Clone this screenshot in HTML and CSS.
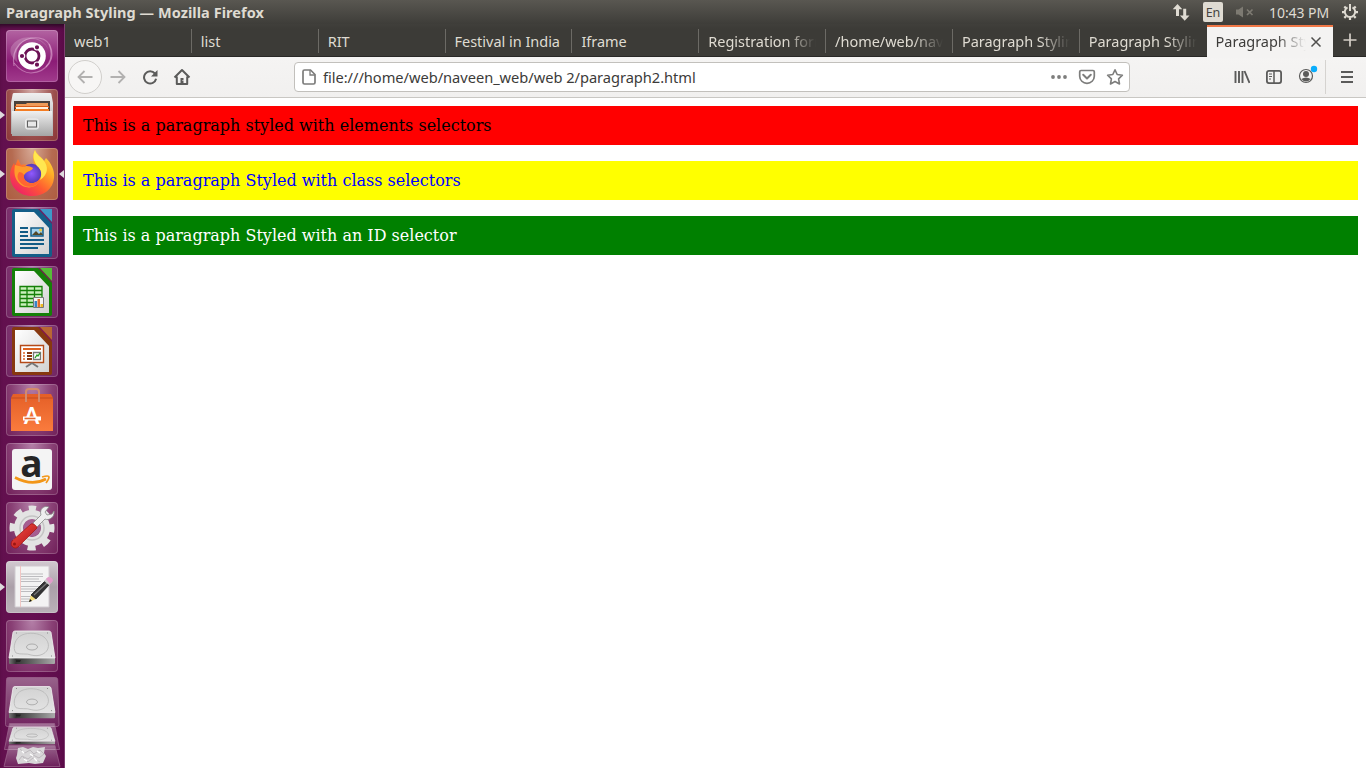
FILE: index.html
```html
<!DOCTYPE html>
<html lang="en">
<head>
<meta charset="utf-8">
<title>Paragraph Styling</title>
<link rel="stylesheet" href="styles.css">
</head>
<body>
<svg class="defs" width="0" height="0" aria-hidden="true">
  <defs>
    <linearGradient id="paper" x1="0" y1="0" x2="1" y2="1"><stop offset="0" stop-color="#fff"/><stop offset="1" stop-color="#d2d2d2"/></linearGradient>
    <linearGradient id="metal" x1="0" y1="0" x2="0" y2="1"><stop offset="0" stop-color="#f0f0f0"/><stop offset="1" stop-color="#a5a5a5"/></linearGradient>
    <linearGradient id="disk" x1="0" y1="0" x2="0" y2="1"><stop offset="0" stop-color="#d2d2d2"/><stop offset="1" stop-color="#e4e4e4"/></linearGradient>
    <linearGradient id="front" x1="0" y1="0" x2="1" y2="0"><stop offset="0" stop-color="#777"/><stop offset=".15" stop-color="#333"/><stop offset="1" stop-color="#aaa"/></linearGradient>
    <linearGradient id="flame" x1="1" y1="0" x2=".2" y2="1"><stop offset="0" stop-color="#fff04f"/><stop offset=".35" stop-color="#ffae26"/><stop offset=".65" stop-color="#ff5b31"/><stop offset="1" stop-color="#ec1d6c"/></linearGradient>
    <radialGradient id="globe"><stop offset="0" stop-color="#9059ff"/><stop offset="1" stop-color="#5639b5"/></radialGradient>
    <linearGradient id="bag" x1="0" y1="0" x2="0" y2="1"><stop offset="0" stop-color="#e45f27"/><stop offset="1" stop-color="#fa7b3d"/></linearGradient>
    <linearGradient id="glass" x1="0" y1="0" x2="0" y2="1"><stop offset="0" stop-color="#fff" stop-opacity=".35"/><stop offset="1" stop-color="#fff" stop-opacity=".08"/></linearGradient>
    <linearGradient id="handle" x1="0" y1="0" x2="1" y2="1"><stop offset="0" stop-color="#f0504b"/><stop offset="1" stop-color="#b3100f"/></linearGradient>
    <symbol id="drive" viewBox="0 0 52 52" preserveAspectRatio="none">
      <path d="M3 38h46v5q0 1-1 1H4q-1 0-1-1z" fill="url(#front)"/>
      <path d="M9 11h34q1.500 0 2 1.500L49 38H3L7 12.500Q7.300 11 9 11z" fill="url(#disk)" stroke="#f5f5f5" stroke-width=".8"/>
      <path d="M10 33c-4-5-1-15 6-18 7-3 17-2 22 2 7 6 5 14-1 17-4 2-8 2-12 1-4-2-10 0-15-2z" fill="none" stroke="#b9b9b9" stroke-width=".9"/>
      <ellipse cx="26" cy="27" rx="5.500" ry="3" fill="#dedede" stroke="#adadad" stroke-width="1"/>
      <path d="M10 40h5l-1 2h-4z" fill="#222"/>
      <path d="M6 36h1M45 36h1M10 13h1M41 13h1" stroke="#888"/>
    </symbol>
  </defs>
</svg>

<div class="desktop">
  <header class="panel">
    <div class="panel-title">Paragraph Styling — Mozilla Firefox</div>
    <div class="indicators">
      <svg class="ind-net" width="18" height="18" viewBox="0 0 18 18"><path d="M5.500 1 .7 6.200H4V13h3V6.200h3.300zM12.700 17.700 7.900 12.500h3.300V5.700h3v6.800h3.300z" fill="#dfdbd2"/></svg>
      <div class="ind-lang">En</div>
      <svg class="ind-sound" width="18" height="12" viewBox="0 0 18 12"><path d="M0 3.500h2.500L7 .5v11L2.500 8.500H0z" fill="#7d7a72"/><path d="m11 3.500 5.500 5.500m0-5.500L11 9" stroke="#7d7a72" stroke-width="1.700"/></svg>
      <div class="ind-time">10:43 PM</div>
      <svg class="ind-gear" width="18" height="18" viewBox="0 0 18 18"><g fill="none" stroke="#dfdbd2"><path d="M6.500 4.300a5.200 5.200 0 1 0 5 0" stroke-width="2"/><path d="M9 1v7" stroke-width="2"/><path d="M1 9.200h2.500M14.500 9.200H17M9 14.500V17M3.300 3.500 5 5.200M14.700 3.500 13 5.200M3.300 14.900 5 13.200M14.700 14.900 13 13.200" stroke-width="2.200"/></g></svg>
    </div>
  </header>

  <div class="workspace">
    <nav class="launcher">
      <div class="tile tile-dash"><svg viewBox="0 0 52 52">
        <g fill="none" stroke="#e9b8dd" stroke-opacity=".5" stroke-width="1.200"><path d="M8 36C5 18 17 6 33 8c14 2 17 20 7 29"/><path d="M43 14c6 14-1 28-18 29-8 0-13-5-17-10"/></g>
        <path d="M5 17C15 0 43 7 43 24c0-9-10-16-18-15C13 10 8 22 12 33 6 28 3 23 5 17z" fill="#fff" opacity=".2"/>
        <circle cx="26" cy="26" r="13.800" fill="#fff"/><circle cx="26" cy="26" r="7" fill="none" stroke="#6b1154" stroke-width="2.800"/>
        <g stroke="#fff" stroke-width="1.200" fill="#6b1154"><circle cx="16" cy="26" r="2.700"/><circle cx="31" cy="17.300" r="2.700"/><circle cx="31" cy="34.700" r="2.700"/></g>
      </svg></div>
      <div class="tile tile-files running"><svg viewBox="0 0 52 52">
        <path d="M8 4h36q1 0 1.300 1L47 14v31H5V14L6.700 5Q7 4 8 4z" fill="url(#metal)"/><path d="M8 12h36v10H8z" fill="#49413b"/>
        <path d="M10 15h10l1-1h21v8H10z" fill="#ef9b58"/><path d="M9 17h34v2H9z" fill="#d95b16"/><path d="M10 18h32v3H10z" fill="#fff2de"/><path d="M9 20h34v2H9z" fill="#f47d23"/>
        <path d="M6 22h40l1 25H6z" fill="url(#metal)"/><rect x="19.500" y="30" width="13" height="10" rx="2" fill="#ddd" stroke="#eee"/><rect x="21.500" y="32" width="9" height="6" fill="#e8e8e8" stroke="#606060"/>
      </svg></div>
      <div class="tile tile-firefox running focused"><svg viewBox="0 0 52 52">
        <path d="M29 2c2 5 7 7 9 11l2-3c5 5 9 12 8 20-1 11-10 18-22 18C13 48 4 39 4 27c0-5 2-9 4-12l1 3 3-7 3 6c5-1 8 0 10 2l4-1c-2-5-3-10 0-16z" fill="url(#flame)"/>
        <circle cx="25.500" cy="25.500" r="9.800" fill="url(#globe)"/>
        <path d="m9 17 8 2c3-2 7-1 10 1-1 3-5 3-7 5-3 2-3 6 0 8 5 4 11 2 14-2-2 9-15 12-22 3-4-5-4-11-3-17z" fill="#ff9b2b"/>
        <path d="M13 24c2 0 4 1 5 3-1 9 10 11 16 4-2 9-15 11-21 2-2-3-2-6 0-9z" fill="#ff6531"/>
        <path d="M29 2c-3 6-1 11 2 16 5 4 5 9 3 14 9-6 8-14 4-19-3-4-8-6-9-11z" fill="#ffe750"/>
      </svg></div>
      <div class="tile tile-office"><svg viewBox="0 0 52 52">
        <rect x="6" y="2" width="40" height="48" rx="2" fill="#145e88"/><path d="M9 5h19l15 16v26H9z" fill="url(#paper)"/><path d="M32 2h14v15z" fill="#83135a" opacity=".8"/><path d="M34 2h12v13z" fill="#3e99c8"/>
        <path d="M14 21h8M14 25h8M14 29h8M14 33h24M14 37h24M14 41h18" stroke="#125c86" stroke-width="1.800"/><path d="M25 21h12v8H25z" fill="#9fd2ed" stroke="#145e88" stroke-width="1.500"/><path d="m26 28 4-4 3 3 2-2 2 3z" fill="#524928"/><circle cx="34.500" cy="23" r="1.500" fill="#efc839"/>
      </svg></div>
      <div class="tile tile-office"><svg viewBox="0 0 52 52">
        <rect x="6" y="2" width="40" height="48" rx="2" fill="#158008"/><path d="M9 5h19l15 16v26H9z" fill="url(#paper)"/><path d="M32 2h14v15z" fill="#83135a" opacity=".8"/><path d="M34 2h12v13z" fill="#56bd38"/>
        <path d="M14 20h22v21H14z" fill="#caf0bc"/><path d="M14 20.500h22v20H14zM14 24.500h22M14 28.500h22M14 32.500h22M14 36.500h22M21 20.500v20M28.500 20.500v20" fill="none" stroke="#158008" stroke-width="1.300"/>
        <path d="M27.500 31.500h10v10h-10z" fill="#f3f3f3" stroke="#777"/><path d="M28.500 35h2.500v6h-2.500z" fill="#3684c6"/><path d="M31.500 33h2.500v8h-2.500z" fill="#e36b28"/><path d="M34.500 38h2.500v3h-2.500z" fill="#edb922"/>
      </svg></div>
      <div class="tile tile-office"><svg viewBox="0 0 52 52">
        <rect x="6" y="2" width="40" height="48" rx="2" fill="#873810"/><path d="M9 5h19l15 16v26H9z" fill="url(#paper)"/><path d="M32 2h14v15z" fill="#83135a" opacity=".8"/><path d="M34 2h12v13z" fill="#b96734"/>
        <path d="M14.500 20.500h23v17h-23z" fill="#fff" stroke="#b54a18" stroke-width="1.400"/><path d="M17 24h18" stroke="#de6220" stroke-width="2"/><path d="M17 28h2M17 31h2M17 34h2" stroke="#e68a5b" stroke-width="2"/><path d="M21 28h5M21 31h5M21 34h5" stroke="#883810" stroke-width="2"/><path d="M27.500 27.500h7v7h-7z" fill="#fff" stroke="#777" stroke-width="1.300"/><path d="m29 33 2-3 1 1 2-3" fill="none" stroke="#269e24" stroke-width="1.300"/><path d="m26 38-6 4m6-4 6 4" stroke="#777" stroke-width="2"/>
      </svg></div>
      <div class="tile"><svg viewBox="0 0 52 52">
        <path d="M7 10h38l2 4v33H5V14z" fill="url(#bag)"/><path d="M5 14h42" stroke="#c34b20"/><path d="M20 18V8q0-3 3-3h7q3 0 3 3v10" fill="none" stroke="#d38a6c" stroke-width="2"/>
        <text x="25.700" y="40" text-anchor="middle" class="software-letter">A</text><path d="M17 34.500h18" stroke="#fff" stroke-width="4"/><path d="M18.500 34.500h11" stroke="#e46831" stroke-width="1.600"/>
      </svg></div>
      <div class="tile"><svg viewBox="0 0 52 52">
        <rect x="6" y="6" width="40" height="41" rx="3" fill="#f4f4f4"/><text x="25.500" y="34" text-anchor="middle" class="amazon-letter">a</text><path d="M9 34.500q17 9 31 1.500" fill="none" stroke="#f29618" stroke-width="2.600"/><path d="M36 34q7-2 7 0t-3 6" fill="none" stroke="#f29618" stroke-width="1.700"/>
      </svg></div>
      <div class="tile"><svg viewBox="0 0 52 52">
        <circle cx="26" cy="26" r="19.500" fill="none" stroke="#e3e3e3" stroke-width="6" stroke-dasharray="8 7.315" stroke-dashoffset="4" transform="rotate(-90 26 26)"/>
        <circle cx="26" cy="26" r="13.500" fill="none" stroke="#e3e3e3" stroke-width="9"/><circle cx="26" cy="26" r="12" fill="none" stroke="#c4c4c4" stroke-width="1.500"/><circle cx="26" cy="26" r="8.500" fill="#a65e91"/>
        <path d="m27 21 8-8c-2-6 3-10 8-8l-4 5 2 3 5-1 2-3c1 6-5 10-9 8l-9 9z" fill="#eee" stroke="#888" stroke-width=".8"/><path d="M25 22c2-1 6 2 6 4L12 45c-3 3-9-1-6-6z" fill="url(#handle)" stroke="#a2110f" stroke-width=".7"/><circle cx="8.500" cy="42" r="1.500" fill="#981512"/>
      </svg></div>
      <div class="tile tile-editor running"><svg viewBox="0 0 52 52">
        <path d="M9 5h34v41H9z" fill="#f3f3f3" stroke="#d0cbd0"/><path d="M14.500 5v41" stroke="#f0bbb8" stroke-width=".8"/><path d="M15 13h22M15 15.500h22M15 18h18M15 20.500h20M15 25.500h22M15 28h17M15 30.500h15M15 35.500h16M15 38h11M15 40.500h9" stroke="#a3a3a8" stroke-width=".7"/>
        <path d="m23 41 2-7 5 4z" fill="#f2dc77"/><path d="m23 41 1-3 2 2z" fill="#111"/><path d="m25 34 14-14 4 4-13 14z" fill="#333" stroke="#111" stroke-width=".7"/><path d="m28 34 13-12" stroke="#777" stroke-width="1.200"/><path d="m38 20 3-3 5 4-3 3z" fill="#ccc"/><path d="m40 18 2-2q5 0 5 4l-3 3z" fill="#e29cca"/>
      </svg></div>
      <div class="tile"><svg viewBox="0 0 52 52"><use href="#drive" width="52" height="52"/></svg></div>
      <svg class="folded" width="65" height="92" viewBox="0 676 65 92">
        <path d="M8.500 677.500h47q2 0 2.200 2l1.300 45q0 2-2 2H7.500q-2 0-2-2l1-45q0-2 2-2z" fill="url(#glass)" stroke="#9b628c" stroke-width=".8"/>
        <use href="#drive" x="6" y="676" width="52" height="50"/>
        <path d="M9.500 723.500h45l5 26h-55z" fill="url(#glass)" stroke="#9b628c" stroke-width=".8"/>
        <use href="#drive" x="6" y="721.500" width="52" height="27"/>
        <path d="M9 745.500h46l5 21H4z" fill="url(#glass)" stroke="#9b628c" stroke-width=".8"/>
        <path d="m18 748 5-1 5 2 5-2 5 1 7-1-1 6 2 3-3 7-8 1-6-1-11 1-2-6 1-3z" fill="#d9d7d9"/><path d="m20 749 5 4 5-3 4 4 6-4 4 4-5 4-6-3-5 4-6-3-3 4m4-3 5 5 5-4 7 4" fill="none" stroke="#bdb9bd" stroke-width="1"/><path d="m22 751 2 2m6 1 3 2m4-5 3 2m-16 6 3 2m7-3 3 3" stroke="#fff" stroke-width="1.500"/>
      </svg>
    </nav>

    <main class="browser">
      <div class="tabs">
        <div class="tab"><span>web1</span></div>
        <div class="tab"><span>list</span></div>
        <div class="tab"><span>RIT</span></div>
        <div class="tab"><span>Festival in India</span></div>
        <div class="tab"><span>Iframe</span></div>
        <div class="tab faded"><span>Registration form</span></div>
        <div class="tab faded"><span>/home/web/naveen</span></div>
        <div class="tab faded"><span>Paragraph Styling</span></div>
        <div class="tab faded"><span>Paragraph Styling</span></div>
        <div class="tab faded active"><span>Paragraph Styling</span><svg width="12" height="12" viewBox="0 0 12 12"><path d="m1.500 1.500 9 9m0-9-9 9" stroke="#504f4d" stroke-width="1.500"/></svg></div>
        <div class="new-tab"><svg width="14" height="14" viewBox="0 0 14 14"><path d="M7 .5v13M.5 7h13" stroke="#d5d0c8" stroke-width="1.700"/></svg></div>
      </div>
      <div class="toolbar">
        <div class="back"><svg width="16" height="16" viewBox="0 0 16 16"><path d="M15.500 8H1.500m6-6-6 6 6 6" fill="none" stroke="#b2b1b0" stroke-width="1.800"/></svg></div>
        <svg class="forward" width="16" height="16" viewBox="0 0 16 16"><path d="M.5 8h14m-6-6 6 6-6 6" fill="none" stroke="#b2b1b0" stroke-width="1.800"/></svg>
        <svg class="reload" width="16" height="16" viewBox="0 0 16 16"><path d="M12.900 4.500a6.100 6.100 0 1 0 1.200 5.200" fill="none" stroke="#5b5b5a" stroke-width="2"/><path d="M15.500 1v6.500H9z" fill="#5b5b5a"/></svg>
        <svg class="home" width="18" height="18" viewBox="0 0 18 18"><path d="m1.500 9.500 7.500-7.500 7.500 7.500M3.800 8.500V16h10.400V8.500" fill="none" stroke="#5b5b5a" stroke-width="2" stroke-linejoin="round"/><path d="M7.500 10h3v6h-3z" fill="#5b5b5a"/><path d="M9.500 12.500h1" stroke="#f4f3f2"/></svg>
        <div class="urlbar">
          <svg width="16" height="16" viewBox="0 0 16 16"><path d="M3.500 1h6L14 5.500v8q0 1.500-1.500 1.500h-9Q2 15 2 13.500v-11Q2 1 3.500 1z" fill="none" stroke="#7c7c7b" stroke-width="1.700"/><path d="M9 1v5h5" fill="none" stroke="#7c7c7b" stroke-width="1.300"/></svg>
          <div class="url">file:///home/web/naveen_web/web 2/paragraph2.html</div>
          <svg width="18" height="18" viewBox="0 0 18 18"><g fill="#7d7d7c"><circle cx="3" cy="9" r="1.900"/><circle cx="9" cy="9" r="1.900"/><circle cx="15" cy="9" r="1.900"/></g></svg>
          <svg width="18" height="18" viewBox="0 0 18 18"><path d="M3 2.500h12q1.300 0 1.300 1.300v4.500a7.300 7 0 0 1-14.600 0V3.800Q1.700 2.500 3 2.500z" fill="none" stroke="#7d7d7c" stroke-width="1.700"/><path d="m5.200 6.800 3.800 3.700 3.800-3.700" fill="none" stroke="#7d7d7c" stroke-width="2" stroke-linecap="round" stroke-linejoin="round"/></svg>
          <svg width="18" height="18" viewBox="0 0 18 18"><path d="m9 1.800 2.200 4.700 5.200.7-3.800 3.600.9 5.200L9 13.500 4.500 16l.9-5.200-3.800-3.600 5.200-.7z" fill="none" stroke="#7d7d7c" stroke-width="1.600" stroke-linejoin="round"/></svg>
        </div>
        <div class="tools">
          <svg width="16" height="16" viewBox="0 0 16 16"><path d="M1.500 2v12M5 2v12M8.500 2v12M10.500 2l5 12" stroke="#5b5b5a" stroke-width="1.900"/></svg>
          <svg width="16" height="16" viewBox="0 0 16 16"><rect x=".9" y="1.900" width="14.200" height="12.200" rx="2" fill="none" stroke="#5b5b5a" stroke-width="1.800"/><path d="M8 2v12" stroke="#5b5b5a" stroke-width="1.500"/><path d="M3 5h3M3 7.500h3M3 10h2" stroke="#5b5b5a"/></svg>
          <svg class="account" width="20" height="20" viewBox="0 0 20 20"><circle cx="8" cy="11" r="6.500" fill="none" stroke="#5b5b5a" stroke-width="1.200"/><circle cx="8" cy="9" r="3" fill="#5b5b5a"/><path d="M3.300 14q4.700-3 9.400 0Q8 19 3.300 14z" fill="#5b5b5a"/><circle cx="16" cy="4" r="3.200" fill="#0aadfc"/></svg>
        </div>
        <div class="menu"><svg width="14" height="14" viewBox="0 0 14 14"><path d="M1 2h12M1 7h12M1 12h12" stroke="#5b5b5a" stroke-width="1.900"/></svg></div>
      </div>
      <article class="page">
        <p class="red">This is a paragraph styled with elements selectors</p>
        <p class="yellow">This is a paragraph Styled with class selectors</p>
        <p class="green">This is a paragraph Styled with an ID selector</p>
      </article>
    </main>
  </div>
</div>
</body>
</html>
```
FILE: styles.css
```css
* { box-sizing: border-box; }
body { margin: 0; overflow: hidden; font-family: "Noto Sans", sans-serif; font-size: 14px; }
.defs { position: absolute; }
svg { display: block; flex: none; }
.desktop { width: 1366px; height: 768px; display: flex; flex-direction: column; }
.panel { height: 24px; flex: none; display: flex; justify-content: space-between; align-items: center; padding: 0 7px 0 6px; background: linear-gradient(#595751, #3e3d39); color: #dfdbd2; }
.panel-title { font-weight: 700; font-size: 14.500px; letter-spacing: .06px; line-height: 24px; }
.indicators { display: flex; align-items: center; height: 24px; }
.ind-lang { width: 20px; height: 20px; margin-left: 13px; border-radius: 2px; background: #dfdbd2; color: #454440; font-size: 12.500px; line-height: 21px; text-align: center; }
.ind-sound { margin-left: 13px; }
.ind-time { width: 61px; margin: 0 11px 0 15px; white-space: nowrap; letter-spacing: -.05px; }
.workspace { flex: 1; min-height: 0; display: flex; }
.launcher { width: 65px; flex: none; padding-top: 6px; display: flex; flex-direction: column; gap: 7px; background: linear-gradient(90deg, #62104e, #651051 50%, #5e0c4b); border-right: 1px solid #7e3c70; box-shadow: inset 0 5px 5px -3px #260820; overflow: hidden; }
.tile { position: relative; width: 52px; height: 52px; flex: none; margin-left: 6px; border-radius: 4px; background: radial-gradient(ellipse at 50% 0, #b480a8, #894075 55%, #702059); box-shadow: inset 0 0 0 1px rgba(255,255,255,.2); }
.tile > svg { width: 52px; height: 52px; }
.tile-dash { background: linear-gradient(#b364a2, #8b1c76 60%, #a13b8c); }
.tile-files { background: radial-gradient(ellipse at 50% 0, #d2aaa6, #9c504d 60%, #8b3638); }
.tile-firefox { background: radial-gradient(ellipse at 50% 0, #d6a995, #b56b51 55%, #ad5c40); }
.tile-office { background: radial-gradient(ellipse at 50% 0, #a175a2, #7d346f 55%, #712561); }
.tile-editor { background: linear-gradient(#d2c9d0, #aba0a9 50%, #bab2b8); }
.running::before, .focused::after { content: ""; position: absolute; top: 22px; border: 4px solid transparent; }
.running::before { left: -6px; border-left: 5px solid #dedbdd; border-right: 0; }
.focused::after { right: -6px; border-right: 5px solid #dedbdd; border-left: 0; }
.software-letter { font: 700 22px Lato, sans-serif; fill: #fff; }
.amazon-letter { font: 700 37px "Open Sans", sans-serif; fill: #252525; }
.folded { margin-top: -3px; }
.browser { flex: 1; min-width: 0; display: flex; flex-direction: column; background: #fff; }
.tabs { height: 33px; flex: none; display: flex; background: linear-gradient(#403f3b, #3c3b37 5px); border-bottom: 1px solid #292826; color: #dfdbd2; }
.tab { position: relative; width: 126.850px; flex: none; display: flex; align-items: center; padding: 2px 10px 0 9px; }
.tab:not(.active):not(:nth-child(9))::after { content: ""; position: absolute; right: 0; top: 5px; height: 24px; border-right: 1px solid #6c6a65; }
.tab span { flex: 1; min-width: 0; overflow: hidden; white-space: nowrap; font-size: 14.500px; letter-spacing: -.02px; line-height: 24px; }
.faded span { mask-image: linear-gradient(90deg, #000 calc(100% - 30px), transparent); }
.tab.active { height: 33px; margin-top: 1px; margin-bottom: -1px; padding: 0 11px 2px 9px; background: #f4f3f2; border-top: 2px solid #f07746; color: #3d3c3a; gap: 4px; }
.active span { margin-top: -2px; }
.new-tab { flex: 1; display: flex; align-items: center; justify-content: center; }
.toolbar { height: 41px; flex: none; display: flex; align-items: center; background: linear-gradient(#f5f4f3, #f1f0ef); border-bottom: 1px solid #c9c7c3; }
.back { width: 34px; height: 34px; margin-left: 3px; border: 1px solid #d1cfcc; border-radius: 50%; display: flex; align-items: center; justify-content: center; background: #f7f6f5; }
.forward { margin-left: 8px; }
.reload { margin-left: 16px; }
.home { margin-left: 15px; }
.urlbar { width: 836px; height: 30px; margin-left: 103px; border: 1px solid #c2c0bc; border-radius: 4px; display: flex; align-items: center; gap: 10px; padding: 0 5px 0 6px; background: #fff; color: #3c3b39; }
.url { flex: 1; margin-left: -4px; white-space: nowrap; font-size: 14.670px; letter-spacing: -.04px; }
.tools { margin-left: 104px; display: flex; align-items: center; gap: 16px; }
.account { margin-top: -4px; }
.menu { flex: 1; height: 34px; border-left: 1px solid #d5d3d0; margin-left: 7px; display: flex; align-items: center; padding-left: 14px; }
.page { flex: 1; padding: 8px; font: 16px/19px "DejaVu Serif", serif; }
.page p { margin: 0 0 16px; padding: 10px; }
.red { background: #f00; color: #000; }
.yellow { background: #ff0; color: #00f; }
.green { background: #008000; color: #fff; }
```
